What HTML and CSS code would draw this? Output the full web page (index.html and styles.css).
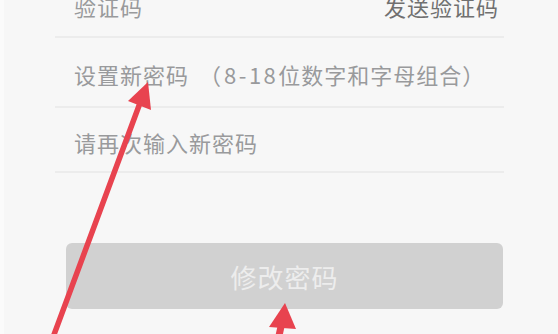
FILE: index.html
```html
<!DOCTYPE html>
<html lang="zh-CN">
<head>
<meta charset="utf-8">
<title>修改密码</title>
<link rel="stylesheet" href="styles.css">
</head>
<body>
<div class="page">
  <div class="form">
    <div class="row row-code">
      <span class="placeholder">验证码</span>
      <span class="send">发送验证码</span>
    </div>
    <div class="row row-new">
      <span class="placeholder">设置新密码<span class="lp">（</span><span class="num">8-18</span>位数字和字母组合）</span>
    </div>
    <div class="row row-again">
      <span class="placeholder">请再次输入新密码</span>
    </div>
    <div class="btn">修改密码</div>
  </div>
  <svg class="annot" width="558" height="334" viewBox="0 0 558 334" aria-hidden="true">
    <line x1="52" y1="340" x2="140" y2="103" stroke="#e8434f" stroke-width="5.5" stroke-linecap="round"/>
    <polygon points="148,82 128,101 151,110" fill="#e8434f"/>
    <line x1="282" y1="322" x2="277" y2="345" stroke="#e8434f" stroke-width="7"/>
    <polygon points="285,303 269,327 296,329" fill="#e8434f"/>
  </svg>
</div>
</body>
</html>
```
FILE: styles.css
```css
html, body {
  margin: 0;
  padding: 0;
}
body {
  background: #f7f7f7;
  font-family: "Noto Sans CJK SC", "Noto Sans", sans-serif;
}
.page {
  position: relative;
  width: 558px;
  height: 334px;
  overflow: hidden;
  border-left: 4px solid #fbfbfb;
  box-sizing: border-box;
}
.form {
  margin: -25px 54px 0 51px;
  display: flex;
  flex-direction: column;
}
.row {
  display: flex;
  align-items: center;
  justify-content: space-between;
  border-bottom: 2px solid #ececec;
  padding: 0 5px 0 19px;
  font-size: 22px;
  letter-spacing: 1px;
  line-height: 1;
  box-sizing: border-box;
}
.row-code {
  height: 63px;
}
.row-new {
  height: 70px;
  padding-top: 3px;
}
.row-again {
  height: 65px;
  padding-top: 5px;
}
.placeholder {
  color: #999a9c;
}
.lp {
  margin-left: 10px;
  letter-spacing: 3px;
}
.num {
  letter-spacing: 2.5px;
}
.send {
  color: #707070;
}
.btn {
  margin: 70px 1px 0 11px;
  height: 66px;
  border-radius: 6px;
  background: #d1d1d1;
  color: #ededed;
  font-size: 26px;
  letter-spacing: 1px;
  display: flex;
  align-items: center;
  justify-content: center;
}
.annot {
  position: absolute;
  left: -4px;
  top: 0;
}
```
